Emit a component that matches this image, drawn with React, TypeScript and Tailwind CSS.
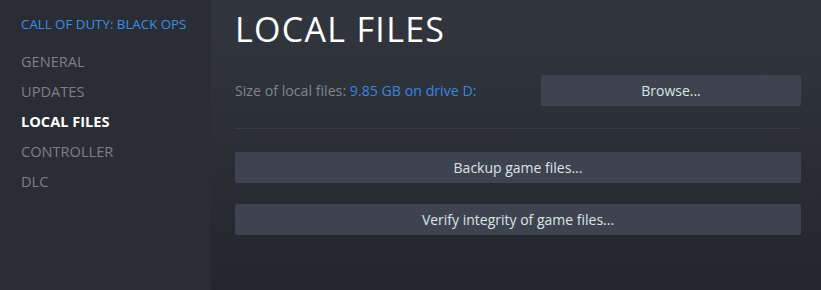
const navItems = ["GENERAL", "UPDATES", "LOCAL FILES", "CONTROLLER", "DLC"]

const App = () => {
  return (
    <div className="flex h-[290px] w-[821px] overflow-hidden font-['Open_Sans',sans-serif]">
      <div className="w-[211px] shrink-0 bg-[#2a2d34] pl-[21px] pt-[15px]">
        <div className="text-[13.3px] leading-[18px] text-[#3a8ee6]">CALL OF DUTY: BLACK OPS</div>
        <div className="mt-[13px] flex flex-col">
          {navItems.map(item => (
            <div
              key={item}
              className={`h-[30px] text-[14.6px] leading-[30px] ${
                item === "LOCAL FILES" ? "font-bold text-white" : "text-[#7d8087]"
              }`}
            >
              {item}
            </div>
          ))}
        </div>
      </div>
      <div className="flex-1 bg-gradient-to-b from-[#32363e] to-[#23262c] pl-[24px] pr-[20px] pt-[7px]">
        <h1 className="text-[34px] font-normal leading-[44px] tracking-[1.3px] text-white">LOCAL FILES</h1>
        <div className="mt-[24px] flex items-center justify-between">
          <div className="text-[14.2px] text-[#80868e]">
            Size of local files: <span className="text-[#3a85e0]">9.85 GB on drive D:</span>
          </div>
          <button
            type="button"
            className="h-[31px] w-[260px] rounded-[2px] bg-[#3d4450] text-[14px] text-[#dfe3e6]"
          >
            Browse...
          </button>
        </div>
        <hr className="mt-[22px] border-[#383c44]" />
        <div className="mt-[23px] flex flex-col gap-[21px]">
          <button
            type="button"
            className="h-[31px] w-full rounded-[2px] bg-[#3d4450] text-[14px] text-[#dfe3e6]"
          >
            Backup game files...
          </button>
          <button
            type="button"
            className="h-[31px] w-full rounded-[2px] bg-[#3d4450] text-[14px] text-[#dfe3e6]"
          >
            Verify integrity of game files...
          </button>
        </div>
      </div>
    </div>
  )
}

export default App
